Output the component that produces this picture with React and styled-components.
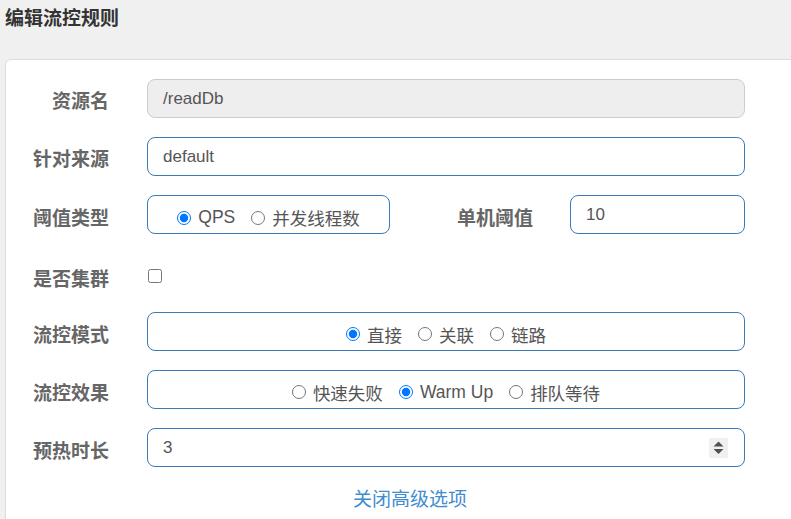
import React from "react";
import styled, { createGlobalStyle } from "styled-components";

const Global = createGlobalStyle`
  html, body { margin: 0; padding: 0; }
  body {
    background: #f0f0f0;
    overflow: hidden;
    font-family: "Liberation Sans", "Noto Sans CJK SC", Arial, sans-serif;
    color: #555;
  }
  input[type=number]::-webkit-inner-spin-button,
  input[type=number]::-webkit-outer-spin-button { -webkit-appearance: none; margin: 0; }
`;

const Page = styled.div`
  width: 791px;
  height: 519px;
  overflow: hidden;
`;

const Header = styled.div`
  height: 59px;
  box-sizing: border-box;
  padding: 7px 0 0 5px;
`;

const Title = styled.h3`
  margin: 0;
  font-size: 19px;
  font-weight: bold;
  color: #333;
  line-height: 24px;
`;

const Card = styled.div`
  margin-left: 5px;
  width: 900px;
  height: 520px;
  background: #fff;
  border: 1px solid #dcdcdc;
  border-radius: 6px;
  box-sizing: border-box;
  padding-top: 19px;
  display: flex;
  flex-direction: column;
  gap: 19.2px;
`;

const Row = styled.div`
  display: flex;
  align-items: center;
  height: 39px;
`;

const Label = styled.label`
  width: ${(p) => p.$w || 103}px;
  text-align: right;
  font-size: 19px;
  font-weight: bold;
  color: #666;
  margin-right: ${(p) => p.$mr || 38}px;
  padding-top: ${(p) => p.$pt ?? 4}px;
  flex-shrink: 0;
`;

const Field = styled.div`
  width: 598px;
  height: 39px;
  display: flex;
  align-items: center;
  position: relative;
`;

const Input = styled.input`
  box-sizing: border-box;
  width: ${(p) => p.$w || "100%"};
  height: 39px;
  padding: 0 15px;
  font-family: inherit;
  font-size: 17px;
  color: #555;
  border: 1px solid ${(p) => (p.disabled ? "#cccccc" : "#3a7ab8")};
  background: ${(p) => (p.disabled ? "#eeeeee" : "#fff")};
  border-radius: 8px;
  outline: none;
  margin: 0;
`;

const RadioBox = styled.div`
  box-sizing: border-box;
  width: ${(p) => p.$w || "100%"};
  height: 39px;
  border: 1px solid #3a7ab8;
  border-radius: 8px;
  display: flex;
  align-items: center;
  justify-content: center;
  padding-top: 6px;
  flex-shrink: 0;
`;

const Opt = styled.label`
  display: inline-flex;
  align-items: center;
  font-size: 17.5px;
  color: #555;
  margin-right: ${(p) => (p.$last ? 0 : 16)}px;
  white-space: nowrap;
`;

const Radio = styled.input.attrs({ type: "radio" })`
  margin: 0 7px 0 0;
  width: 14px;
  height: 14px;
`;

const Check = styled.input.attrs({ type: "checkbox" })`
  margin: 6px 0 0 1px;
  width: 14px;
  height: 14px;
`;

const SubLabel = styled(Label)`
  flex: 1;
  width: auto;
  margin-right: 37px;
`;

const Spinner = styled.div`
  position: absolute;
  right: 17px;
  top: 10px;
  width: 19px;
  height: 20px;
  background: #f0f0f0;
  display: flex;
  align-items: center;
  justify-content: center;
`;

const LinkRow = styled.div`
  padding-left: 347px;
  margin-top: -2px;
`;

const Link = styled.a`
  font-size: 19px;
  color: #3f8ccf;
  text-decoration: none;
  cursor: pointer;
`;

export default function App() {
  return (
    <Page>
      <Global />
      <Header>
        <Title>编辑流控规则</Title>
      </Header>
      <Card>
        <Row>
          <Label $pt={2}>资源名</Label>
          <Field>
            <Input disabled value="/readDb" readOnly />
          </Field>
        </Row>
        <Row>
          <Label $pt={2}>针对来源</Label>
          <Field>
            <Input defaultValue="default" />
          </Field>
        </Row>
        <Row>
          <Label>阈值类型</Label>
          <Field>
            <RadioBox $w="243px">
              <Opt>
                <Radio name="grade" defaultChecked />
                QPS
              </Opt>
              <Opt $last>
                <Radio name="grade" />
                并发线程数
              </Opt>
            </RadioBox>
            <SubLabel>单机阈值</SubLabel>
            <Input $w="175px" defaultValue="10" />
          </Field>
        </Row>
        <Row>
          <Label $pt={8}>是否集群</Label>
          <Field>
            <Check />
          </Field>
        </Row>
        <Row>
          <Label>流控模式</Label>
          <Field>
            <RadioBox>
              <Opt>
                <Radio name="mode" defaultChecked />
                直接
              </Opt>
              <Opt>
                <Radio name="mode" />
                关联
              </Opt>
              <Opt $last>
                <Radio name="mode" />
                链路
              </Opt>
            </RadioBox>
          </Field>
        </Row>
        <Row>
          <Label>流控效果</Label>
          <Field>
            <RadioBox>
              <Opt>
                <Radio name="effect" />
                快速失败
              </Opt>
              <Opt>
                <Radio name="effect" defaultChecked />
                Warm Up
              </Opt>
              <Opt $last>
                <Radio name="effect" />
                排队等待
              </Opt>
            </RadioBox>
          </Field>
        </Row>
        <Row>
          <Label>预热时长</Label>
          <Field>
            <Input type="number" defaultValue="3" />
            <Spinner>
              <svg width="11" height="14" viewBox="0 0 11 14">
                <path d="M5.5 0.5 L10.5 5.5 L0.5 5.5 Z" fill="#505050" />
                <path d="M0.5 8 L10.5 8 L5.5 13 Z" fill="#505050" />
              </svg>
            </Spinner>
          </Field>
        </Row>
        <LinkRow>
          <Link>关闭高级选项</Link>
        </LinkRow>
      </Card>
    </Page>
  );
}
